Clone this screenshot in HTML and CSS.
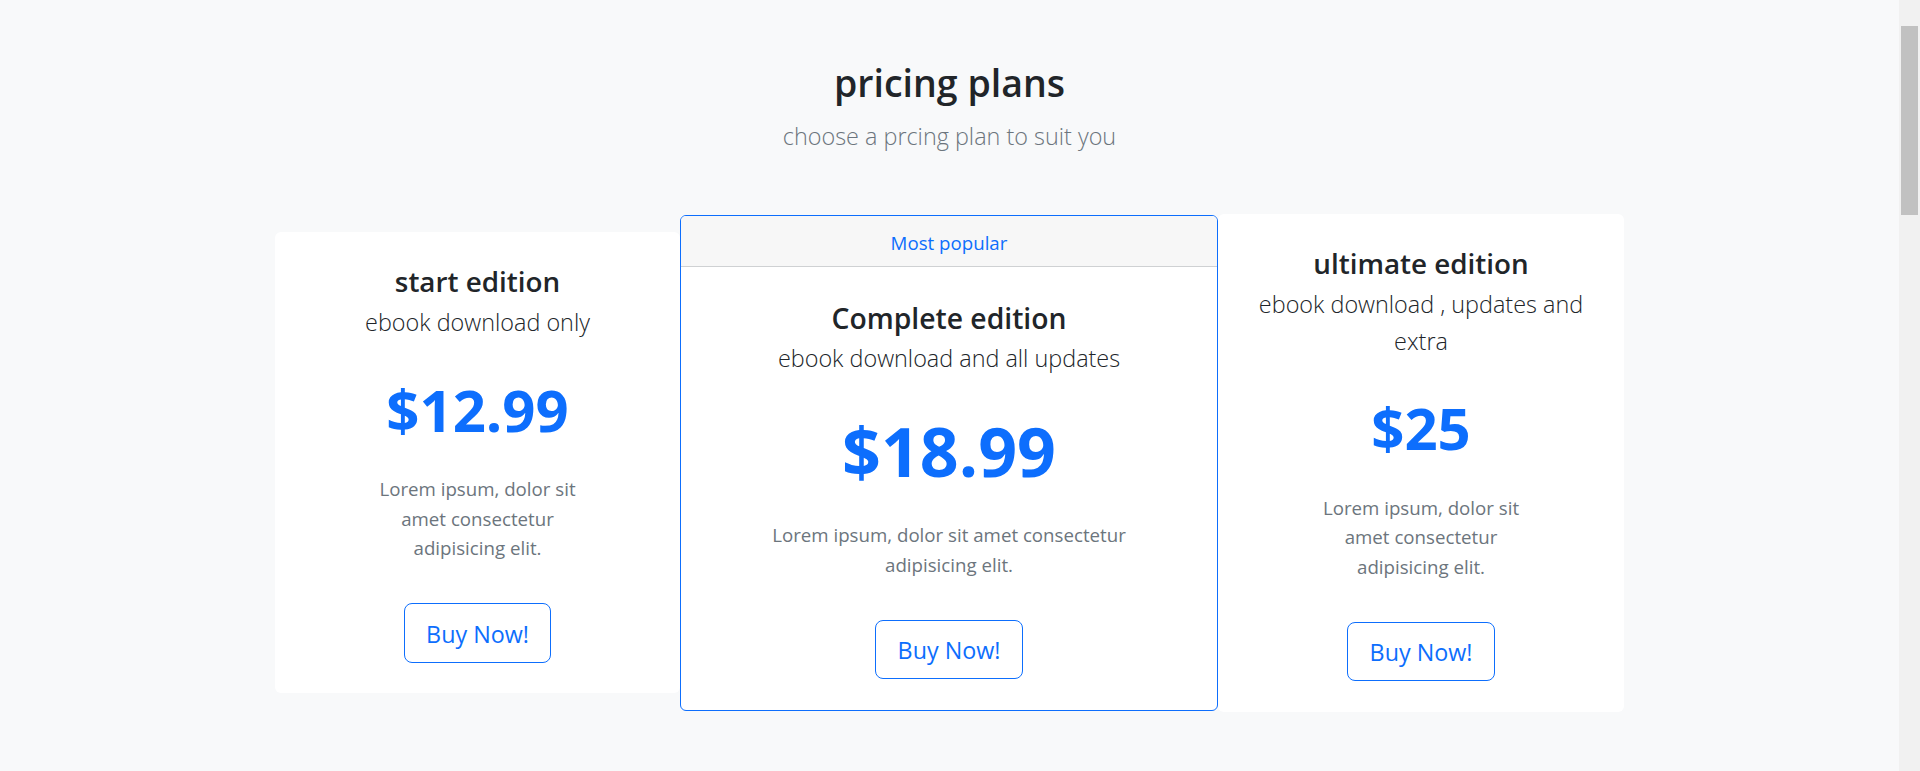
FILE: index.html
```html
<!DOCTYPE html>
<html lang="en">
<head>
<meta charset="utf-8">
<title>pricing plans</title>
<link rel="stylesheet" href="styles.css">
</head>
<body>
<div class="page">
  <header class="intro">
    <h1 class="intro-title">pricing plans</h1>
    <p class="intro-lead">choose a prcing plan to suit you</p>
  </header>

  <section class="plans">
    <div class="plan plan-side plan-start">
      <div class="plan-body">
        <h3 class="plan-title">start edition</h3>
        <p class="plan-lead">ebook download only</p>
        <div class="plan-price">$12.99</div>
        <p class="plan-text">Lorem ipsum, dolor sit amet consectetur adipisicing elit.</p>
        <button type="button" class="btn">Buy Now!</button>
      </div>
    </div>

    <div class="plan plan-featured">
      <div class="plan-header">Most popular</div>
      <div class="plan-body plan-body-featured">
        <h3 class="plan-title plan-title-featured">Complete edition</h3>
        <p class="plan-lead plan-lead-featured">ebook download and all updates</p>
        <div class="plan-price plan-price-featured">$18.99</div>
        <p class="plan-text plan-text-featured">Lorem ipsum, dolor sit amet consectetur adipisicing elit.</p>
        <button type="button" class="btn btn-featured">Buy Now!</button>
      </div>
    </div>

    <div class="plan plan-side plan-ultimate">
      <div class="plan-body">
        <h3 class="plan-title">ultimate edition</h3>
        <p class="plan-lead plan-lead-wrap">ebook download , updates and extra</p>
        <div class="plan-price">$25</div>
        <p class="plan-text">Lorem ipsum, dolor sit amet consectetur adipisicing elit.</p>
        <button type="button" class="btn">Buy Now!</button>
      </div>
    </div>
  </section>
</div>

<div class="scrollbar"><div class="scrollbar-thumb"></div></div>
</body>
</html>
```
FILE: styles.css
```css
* { box-sizing: border-box; }

html, body { margin: 0; }

body {
  background: #f8f9fa;
  font-family: "Open Sans", "Noto Sans", sans-serif;
  color: #212529;
  overflow: hidden;
}

.page {
  width: calc(100% - 21px);
  padding-top: 60px;
}

/* intro */
.intro { text-align: center; }

.intro-title {
  margin: 0;
  font-size: 37.5px;
  line-height: 45px;
  font-weight: 600;
  color: #212529;
}

.intro-lead {
  margin: 12.7px 0 0;
  font-size: 23.4px;
  line-height: 36px;
  font-weight: 300;
  color: #6c757d;
}

/* plans row */
.plans {
  display: flex;
  justify-content: center;
  align-items: center;
  margin-top: 60.1px;
}

.plan {
  background: #fff;
  border-radius: 6px;
  text-align: center;
}

.plan-start { width: 405px; }
.plan-ultimate { width: 406px; }

.plan-featured {
  width: 538px;
  border: 1px solid #0d6efd;
  border-radius: 6px;
  overflow: hidden;
}

.plan-header {
  padding: 13px 0 9px;
  font-size: 18.7px;
  line-height: 28px;
  color: #0d6efd;
  background: #f7f7f7;
  border-bottom: 1px solid #cfd1d3;
}

.plan-body {
  display: flex;
  flex-direction: column;
  align-items: center;
  padding: 32px 20px 30.3px;
}

.plan-body-featured { padding-top: 33.9px; }

.plan-title {
  margin: 0;
  font-size: 27.8px;
  line-height: 34px;
  font-weight: 600;
  color: #212529;
}

.plan-title-featured { font-size: 28.3px; }

.plan-lead {
  margin: 6.2px 0 0;
  font-size: 23.4px;
  line-height: 37px;
  font-weight: 300;
  color: #212529;
}

.plan-lead-featured { margin-top: 5.5px; }

.plan-lead-wrap { width: 340px; }

.plan-price {
  margin-top: 33.3px;
  font-size: 58px;
  line-height: 70px;
  font-weight: 700;
  color: #0d6efd;
}

.plan-price-featured {
  margin-top: 33.8px;
  font-size: 68px;
  line-height: 80px;
}

.plan-text {
  margin: 29.5px 0 0;
  width: 220px;
  font-size: 18.7px;
  line-height: 29.6px;
  color: #6c757d;
}

.plan-text-featured {
  margin-top: 29.4px;
  width: 400px;
}

.btn {
  margin-top: 40.3px;
  padding: 11.5px 21.25px 10px;
  font-family: inherit;
  font-size: 23.3px;
  line-height: 36px;
  font-weight: 400;
  color: #0d6efd;
  background: transparent;
  border: 1px solid #0d6efd;
  border-radius: 8px;
  cursor: pointer;
}

.btn-featured { margin-top: 40.5px; }

/* simulated browser scrollbar */
.scrollbar {
  position: fixed;
  top: 0;
  right: 0;
  width: 21px;
  height: 100%;
  background: #f1f1f1;
}

.scrollbar-thumb {
  position: absolute;
  top: 26px;
  left: 2px;
  width: 17px;
  height: 189px;
  background: #c1c1c1;
}
```
